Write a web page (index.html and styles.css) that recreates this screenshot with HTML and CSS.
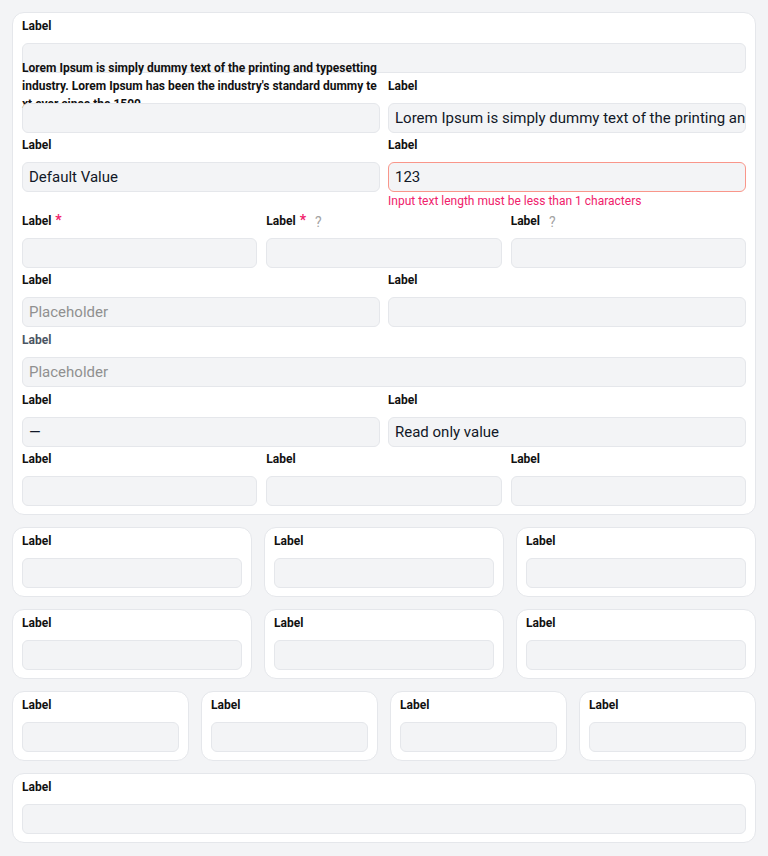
FILE: index.html
```html
<!DOCTYPE html>
<html>
<head>
<meta charset="utf-8">
<link rel="stylesheet" href="styles.css">
</head>
<body>
<div class="page">
  <section class="card card-main">
    <div class="grid cols-1">
      <div class="field"><div class="label"><span>Label</span></div><div class="input"></div></div>
    </div>
    <div class="grid cols-2">
      <div class="field"><div class="label"><span class="long">Lorem Ipsum is simply dummy text of the printing and typesetting industry. Lorem Ipsum has been the industry's standard dummy text ever since the 1500</span></div><div class="input"></div></div>
      <div class="field"><div class="label"><span>Label</span></div><div class="input"><span class="value">Lorem Ipsum is simply dummy text of the printing and typesetting industry.</span></div></div>
    </div>
    <div class="grid cols-2">
      <div class="field"><div class="label"><span>Label</span></div><div class="input"><span class="value">Default Value</span></div></div>
      <div class="field"><div class="label"><span>Label</span></div><div class="input error"><span class="value">123</span></div><div class="error-text">Input text length must be less than 1 characters</div></div>
    </div>
    <div class="grid cols-3">
      <div class="field"><div class="label"><span>Label</span><span class="req">*</span></div><div class="input"></div></div>
      <div class="field"><div class="label"><span>Label</span><span class="req">*</span><span class="help">?</span></div><div class="input"></div></div>
      <div class="field"><div class="label"><span>Label</span><span class="help">?</span></div><div class="input"></div></div>
    </div>
    <div class="grid cols-2">
      <div class="field"><div class="label"><span>Label</span></div><div class="input"><span class="placeholder">Placeholder</span></div></div>
      <div class="field"><div class="label"><span>Label</span></div><div class="input"></div></div>
    </div>
    <div class="grid cols-1">
      <div class="field disabled"><div class="label"><span>Label</span></div><div class="input"><span class="placeholder">Placeholder</span></div></div>
    </div>
    <div class="grid cols-2">
      <div class="field"><div class="label"><span>Label</span></div><div class="input"><span class="value">—</span></div></div>
      <div class="field"><div class="label"><span>Label</span></div><div class="input"><span class="value">Read only value</span></div></div>
    </div>
    <div class="grid cols-3">
      <div class="field"><div class="label"><span>Label</span></div><div class="input"></div></div>
      <div class="field"><div class="label"><span>Label</span></div><div class="input"></div></div>
      <div class="field"><div class="label"><span>Label</span></div><div class="input"></div></div>
    </div>
  </section>

  <div class="row cols-3">
    <section class="card"><div class="field"><div class="label"><span>Label</span></div><div class="input"></div></div></section>
    <section class="card"><div class="field"><div class="label"><span>Label</span></div><div class="input"></div></div></section>
    <section class="card"><div class="field"><div class="label"><span>Label</span></div><div class="input"></div></div></section>
  </div>
  <div class="row cols-3">
    <section class="card"><div class="field"><div class="label"><span>Label</span></div><div class="input"></div></div></section>
    <section class="card"><div class="field"><div class="label"><span>Label</span></div><div class="input"></div></div></section>
    <section class="card"><div class="field"><div class="label"><span>Label</span></div><div class="input"></div></div></section>
  </div>
  <div class="row cols-4">
    <section class="card"><div class="field"><div class="label"><span>Label</span></div><div class="input"></div></div></section>
    <section class="card"><div class="field"><div class="label"><span>Label</span></div><div class="input"></div></div></section>
    <section class="card"><div class="field"><div class="label"><span>Label</span></div><div class="input"></div></div></section>
    <section class="card"><div class="field"><div class="label"><span>Label</span></div><div class="input"></div></div></section>
  </div>
  <div class="row cols-1">
    <section class="card"><div class="field"><div class="label"><span>Label</span></div><div class="input"></div></div></section>
  </div>
</div>
</body>
</html>
```

FILE: styles.css
```css
* { box-sizing: border-box; }
html, body { margin: 0; padding: 0; }
body {
  background: #f3f4f6;
  font-family: Roboto, "Liberation Sans", sans-serif;
  color: #111827;
}
.page {
  padding: 12px;
  display: flex;
  flex-direction: column;
  gap: 12px;
}
.card {
  background: #ffffff;
  border: 1px solid #e5e7eb;
  border-radius: 12px;
  padding: 4px 9px 8px;
  min-width: 0;
}
.card-main {
  display: flex;
  flex-direction: column;
  gap: 3.6px;
}
.grid { display: grid; column-gap: 8px; }
.row { display: grid; column-gap: 12px; }
.cols-1 { grid-template-columns: 1fr; }
.cols-2 { grid-template-columns: 1fr 1fr; }
.cols-3 { grid-template-columns: 1fr 1fr 1fr; }
.card-main .cols-3 { column-gap: 9px; }
.cols-4 { grid-template-columns: 1fr 1fr 1fr 1fr; }
.field { min-width: 0; display: flex; flex-direction: column; }
.label {
  position: relative;
  height: 18px;
  margin-bottom: 8px;
  display: flex;
  align-items: center;
  font-size: 12px;
  line-height: 18px;
  font-weight: 700;
  color: #111111;
  white-space: nowrap;
}
.label .long {
  white-space: normal;
  word-break: break-all;
}
.req {
  color: #f0216b;
  font-size: 14px;
  margin-left: 4px;
  position: relative;
  top: -1px;
}
.help {
  color: #a3a3a3;
  font-weight: 400;
  font-size: 14px;
  margin-left: 9px;
  position: relative;
  top: 1px;
}
.disabled .label { color: #4b5563; }
.input {
  position: relative;
  height: 30px;
  background: #f3f4f6;
  border: 1px solid #e5e7eb;
  border-radius: 6px;
  padding: 0 6px;
  display: flex;
  align-items: center;
  overflow: hidden;
  font-size: 15px;
  color: #111827;
  white-space: nowrap;
}
.input.error { border-color: #f9968a; }
.value { white-space: nowrap; }
.placeholder { color: #909090; }
.error-text {
  margin-top: 2px;
  font-size: 12px;
  line-height: 14px;
  color: #f0216b;
}
```
